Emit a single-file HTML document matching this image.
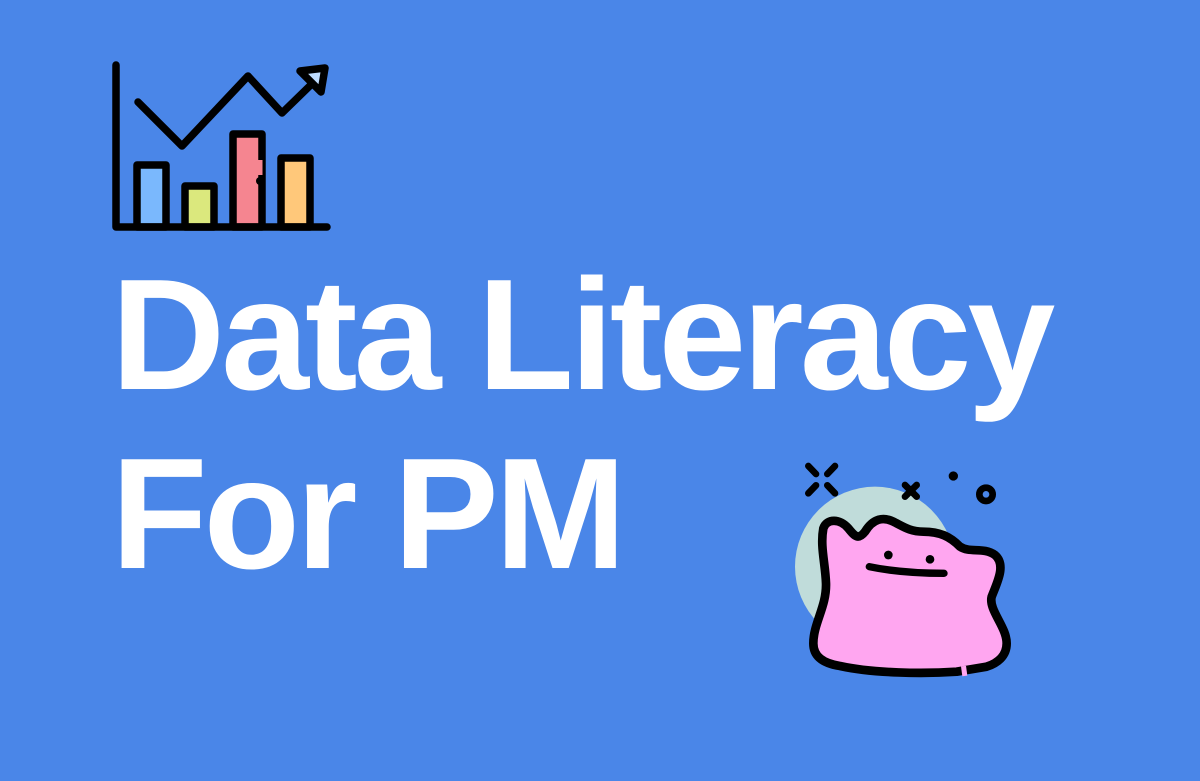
<!DOCTYPE html>
<html><head><meta charset="utf-8"><style>
html,body{margin:0;padding:0}
body{width:1200px;height:781px;background:#4a86e8;position:relative;overflow:hidden}
.t{position:absolute;left:111px;color:#fff;font-family:"Liberation Sans",sans-serif;font-weight:bold;font-size:158px;letter-spacing:-4px;line-height:1;white-space:nowrap}
svg{position:absolute}
</style></head><body>
<svg style="left:0;top:0" width="1200" height="781" viewBox="0 0 1200 781">
 <g stroke="#000" stroke-width="7.5" stroke-linecap="round" stroke-linejoin="round">
  <rect x="137" y="165" width="29" height="62" fill="#7ab8fd"/>
  <rect x="185" y="186" width="29" height="41" fill="#dbe87d"/>
  <rect x="233" y="134" width="29" height="93" fill="#f58590"/>
  <rect x="281" y="158" width="29" height="69" fill="#ffc87a"/>
  <polyline points="116,65 116,227 327,227" fill="none"/>
  <polyline points="138,102 182,146 248,76 282,113 320,76" fill="none"/>
  <polygon points="300,71 325,68 321,92" fill="#bfdcff"/>
 </g>
 <line x1="260" y1="160" x2="260" y2="175" stroke="#f58590" stroke-width="5"/>
 <circle cx="260" cy="181" r="4" fill="#000"/>
</svg>
<div class="t" style="top:256px">Data Literacy</div>
<div class="t" style="top:435px">For PM</div>
<svg style="left:790px;top:450px" width="240" height="240" viewBox="0 0 720 720">
 <circle cx="255" cy="350" r="240" fill="#c0dcda"/>
 <path d="M100,235 C110,205 150,205 175,235 C195,260 205,270 225,245 C250,205 280,200 310,215 C340,230 360,245 400,245 C450,245 480,260 510,290 C540,310 580,290 615,315 C650,345 620,400 605,440 C595,480 650,530 650,580 C650,620 620,640 590,650 L500,665 C400,672 250,670 150,648 C100,640 70,620 70,580 C70,520 110,470 108,400 C106,340 90,290 100,235 Z" fill="#ffa6f0" stroke="#000" stroke-width="26" stroke-linejoin="round"/>
 <path d="M515,664 L530,662" stroke="#ffa6f0" stroke-width="30"/>
 <circle cx="295" cy="315" r="13" fill="#000"/>
 <circle cx="420" cy="328" r="13" fill="#000"/>
 <path d="M238,350 C310,365 390,370 462,370" fill="none" stroke="#000" stroke-width="22" stroke-linecap="round"/>
 <g stroke="#000" stroke-width="20" stroke-linecap="round" fill="none">
  <path d="M55,48 L78,72 M135,48 L112,72 M55,130 L78,106 M135,130 L112,106"/>
  <path d="M345,105 L380,140 M380,105 L345,140"/>
  <circle cx="588" cy="133" r="20"/>
 </g>
 <circle cx="490" cy="78" r="14" fill="#000"/>
</svg>
</body></html>
